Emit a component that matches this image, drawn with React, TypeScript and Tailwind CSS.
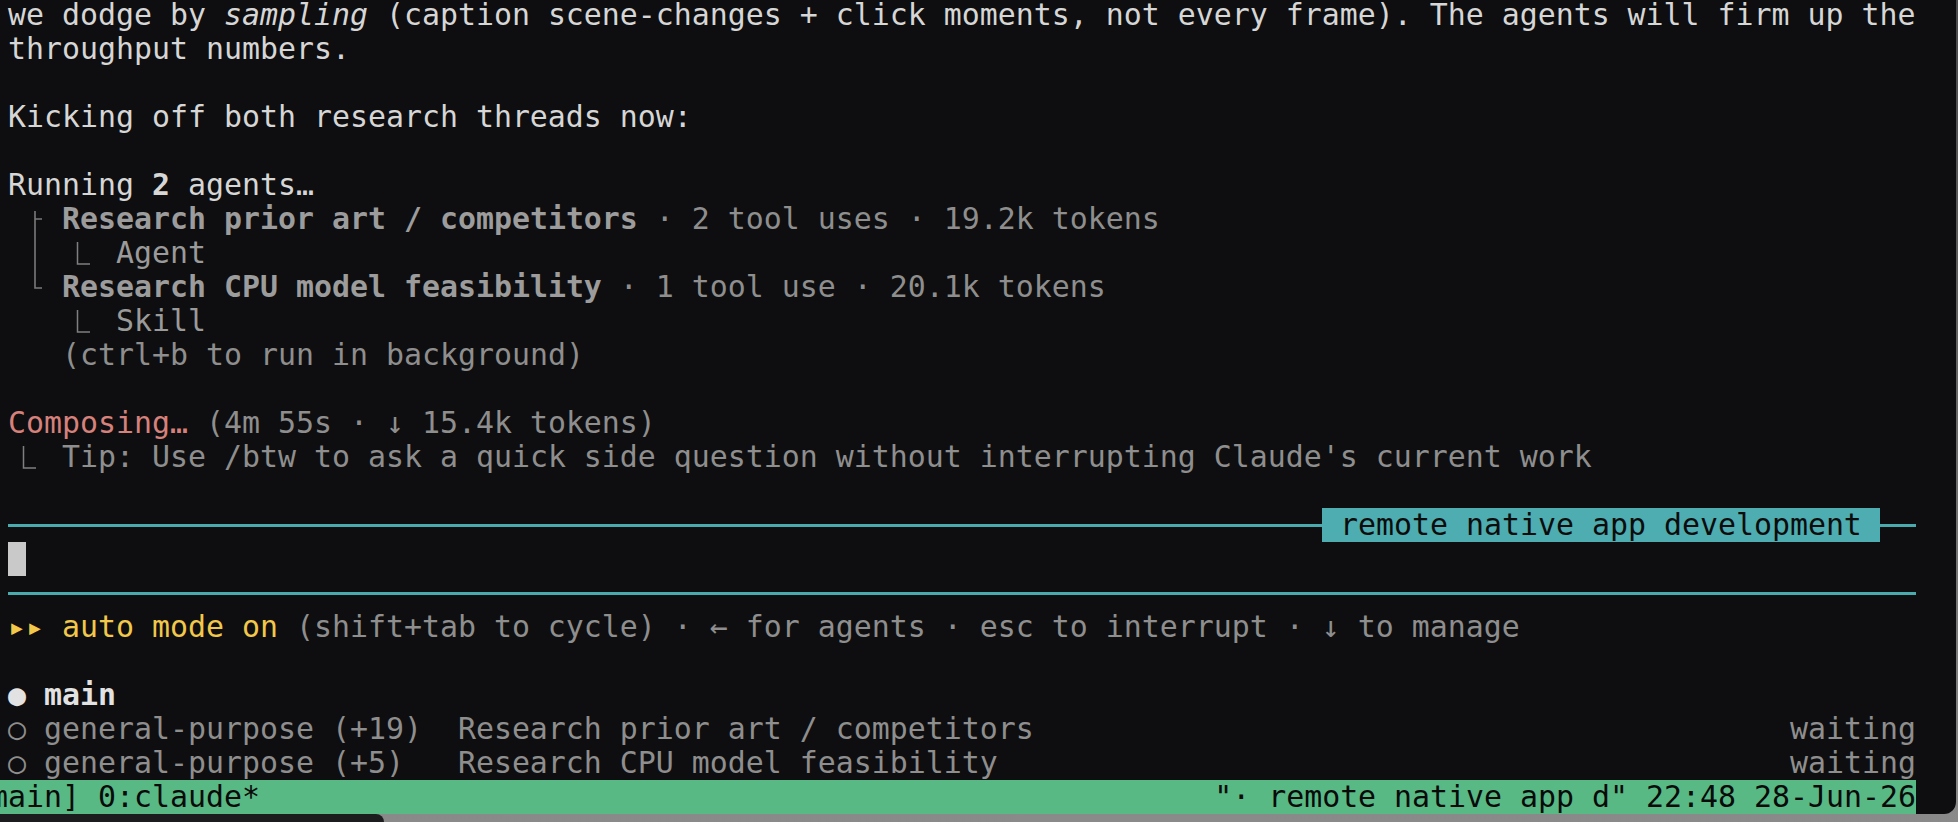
import React from "react";

const TEAL_LINE = "h-[3px] bg-[#4aabae]";

function Cell({ children }: { children: React.ReactNode }) {
  return (
    <span className="inline-block w-[18px] h-[34px] align-top">
      <svg width={18} height={34} className="overflow-visible block">
        {children}
      </svg>
    </span>
  );
}

function TeeGlyph() {
  return (
    <Cell>
      <path d="M9 9 V34 M9 17 H16" stroke="#7a7a7a" strokeWidth={1.6} fill="none" />
    </Cell>
  );
}
function PipeGlyph() {
  return (
    <Cell>
      <path d="M9 0 V34" stroke="#7a7a7a" strokeWidth={1.6} fill="none" />
    </Cell>
  );
}
function ElbowGlyph() {
  return (
    <Cell>
      <path d="M9 0 V18 H16" stroke="#7a7a7a" strokeWidth={1.6} fill="none" />
    </Cell>
  );
}
function CornerGlyph() {
  return (
    <Cell>
      <path d="M-2.5 6 V28 H10" stroke="#7f7f7f" strokeWidth={1.5} fill="none" />
    </Cell>
  );
}

function Row({ children, className = "" }: { children?: React.ReactNode; className?: string }) {
  return (
    <div className={"h-[34px] leading-[34px] whitespace-pre pl-[8px] " + className}>
      {children}
    </div>
  );
}

export default function App() {
  return (
    <div className="w-[1958px] h-[822px] overflow-hidden bg-linear-to-b from-[#4a4a4c] to-[#8a8a8a] font-['DejaVu_Sans_Mono',monospace] text-[29.9px] text-[#d6d6d6]">
      <div className="w-[1956px] h-[814px] bg-[#0e0e10] rounded-br-[12px] overflow-hidden">
        <div className="h-[32px] leading-[30px] whitespace-pre pl-[8px] overflow-visible">
          we dodge by <span className="italic">sampling</span> (caption scene-changes + click moments, not every frame). The agents will firm up the
        </div>
        <Row>throughput numbers.</Row>
        <Row />
        <Row>Kicking off both research threads now:</Row>
        <Row />
        <Row>
          Running <span className="font-bold">2</span> agents…
        </Row>
        <Row className="text-[#8e8e8e]">
          {" "}
          <TeeGlyph />
          {" "}
          <span className="font-bold text-[#9c9c9c]">Research prior art / competitors</span> · 2 tool uses · 19.2k tokens
        </Row>
        <Row className="text-[#9a9a9a]">
          {" "}
          <PipeGlyph />
          {"  "}
          <CornerGlyph />
          {" "}Agent
        </Row>
        <Row className="text-[#8e8e8e]">
          {" "}
          <ElbowGlyph />
          {" "}
          <span className="font-bold text-[#9c9c9c]">Research CPU model feasibility</span> · 1 tool use · 20.1k tokens
        </Row>
        <Row className="text-[#9a9a9a]">
          {"    "}
          <CornerGlyph />
          {" "}Skill
        </Row>
        <Row className="text-[#8e8e8e]">{"   "}(ctrl+b to run in background)</Row>
        <Row />
        <Row className="text-[#8e8e8e]">
          <span className="text-[#d6817b]">Composing…</span> (4m 55s · ↓ 15.4k tokens)
        </Row>
        <Row className="text-[#8e8e8e]">
          {" "}
          <CornerGlyph />
          {" "}Tip: Use /btw to ask a quick side question without interrupting Claude's current work
        </Row>
        <Row />
        <div className="h-[34px] pl-[8px] flex items-center">
          <div className={"w-[1314px] " + TEAL_LINE} />
          <div className="w-[558px] h-[34px] leading-[34px] whitespace-pre bg-[#4eadb0] text-[#0c0c0c]">
            {" remote native app development "}
          </div>
          <div className={"w-[36px] " + TEAL_LINE} />
        </div>
        <div className="h-[34px] pl-[8px] flex">
          <div className="w-[18px] h-[34px] bg-[#c9c9c9]" />
        </div>
        <div className="h-[34px] pl-[8px] flex items-center">
          <div className={"w-[1908px] " + TEAL_LINE} />
        </div>
        <Row className="text-[#8e8e8e]">
          <span className="text-[#f2c84b]">▸▸ auto mode on</span> (shift+tab to cycle) · ← for agents · esc to interrupt · ↓ to manage
        </Row>
        <Row />
        <Row className="text-[#e2e2e2] font-bold">● main</Row>
        <div className="h-[34px] leading-[34px] whitespace-pre pl-[8px] w-[1916px] flex justify-between text-[#8e8e8e]">
          <span>○ general-purpose (+19)  Research prior art / competitors</span>
          <span>waiting</span>
        </div>
        <div className="h-[34px] leading-[34px] whitespace-pre pl-[8px] w-[1916px] flex justify-between text-[#8e8e8e]">
          <span>○ general-purpose (+5)   Research CPU model feasibility</span>
          <span>waiting</span>
        </div>
        <div className="h-[34px] leading-[34px] whitespace-pre w-[1916px] flex justify-between bg-[#58b985] text-[#0a0a0a] overflow-hidden">
          <span className="-ml-[28px]">[main] 0:claude*</span>
          <span>"· remote native app d" 22:48 28-Jun-26</span>
        </div>
      </div>
      <div className="h-[8px] flex">
        <div className="w-[384px] h-[8px] bg-[#1c1c1e] rounded-tr-[10px]" />
      </div>
    </div>
  );
}
